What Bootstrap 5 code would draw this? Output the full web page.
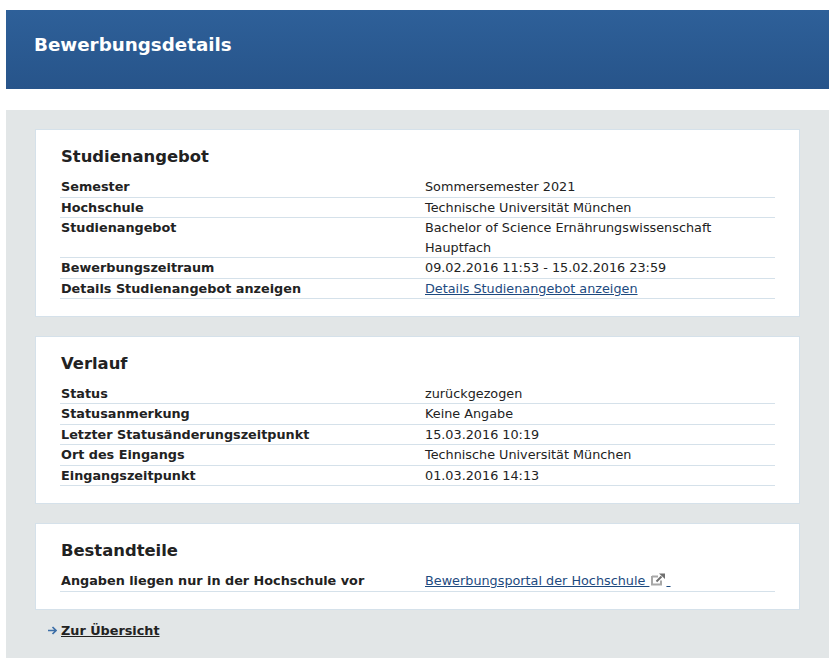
<!DOCTYPE html>
<html lang="de">
<head>
    <meta charset="UTF-8">
    <meta name="viewport" content="width=device-width, initial-scale=1">
    <title>Bewerbungsdetails</title>
    <link href="https://cdn.jsdelivr.net/npm/bootstrap@5.3.0/dist/css/bootstrap.min.css" rel="stylesheet">
    <script src="https://cdn.jsdelivr.net/npm/bootstrap@5.3.0/dist/js/bootstrap.bundle.min.js"></script>
    <style>
        html, body { height: 658px; overflow: hidden; }
        body { font-family: "DejaVu Sans", Verdana, sans-serif; font-size: 12.8px; color: #222; background: #fff; padding: 10px 7px 0 6px; }
        .page-head { height: 79px; padding: 0 28px; background: linear-gradient(#2e6099, #27548a); color: #fff; margin-bottom: 21px; }
        .page-head h1 { font-size: 18.3px; font-weight: 700; margin: 0; padding-top: 24px; line-height: 22px; }
        .page-body { background: #e2e6e7; height: 548px; padding: 19px 29px 0; }
        .detail-box { background: #fff; border: 1px solid #d5e1ea; padding: 16px 24px 17px 25px; margin-bottom: 18.6px; }
        .detail-box h2 { font-size: 16.4px; font-weight: 700; line-height: 22px; margin: 0 0 9.2px; color: #222; }
        .detail-row { display: flex; line-height: 19.5px; border-bottom: 1px solid #d5e1ea; margin-left: -1px; padding-left: 1px; }
        .detail-key { width: 364px; flex: none; font-weight: 700; }
        .detail-val a { color: #1d4a80; }
        .back-link { color: #222; font-weight: 700; margin-left: 13px; margin-top: -7.5px; }
        .back-link a { color: #222; }
        .ext-icon { margin: -3px 0 -2px 2px; vertical-align: 1px; }
    </style>
</head>
<body>

    <div class="page-head">
        <h1>Bewerbungsdetails</h1>
    </div>

    <div class="page-body">

        <div class="detail-box">
            <h2>Studienangebot</h2>
            <div class="detail-row"><div class="detail-key">Semester</div><div class="detail-val">Sommersemester 2021</div></div>
            <div class="detail-row"><div class="detail-key">Hochschule</div><div class="detail-val">Technische Universität München</div></div>
            <div class="detail-row"><div class="detail-key">Studienangebot</div><div class="detail-val">Bachelor of Science Ernährungswissenschaft<br>Hauptfach</div></div>
            <div class="detail-row"><div class="detail-key">Bewerbungszeitraum</div><div class="detail-val">09.02.2016 11:53 - 15.02.2016 23:59</div></div>
            <div class="detail-row"><div class="detail-key">Details Studienangebot anzeigen</div><div class="detail-val"><a href="#">Details Studienangebot anzeigen</a></div></div>
        </div>

        <div class="detail-box">
            <h2>Verlauf</h2>
            <div class="detail-row"><div class="detail-key">Status</div><div class="detail-val">zurückgezogen</div></div>
            <div class="detail-row"><div class="detail-key">Statusanmerkung</div><div class="detail-val">Keine Angabe</div></div>
            <div class="detail-row"><div class="detail-key">Letzter Statusänderungszeitpunkt</div><div class="detail-val">15.03.2016 10:19</div></div>
            <div class="detail-row"><div class="detail-key">Ort des Eingangs</div><div class="detail-val">Technische Universität München</div></div>
            <div class="detail-row"><div class="detail-key">Eingangszeitpunkt</div><div class="detail-val">01.03.2016 14:13</div></div>
        </div>

        <div class="detail-box">
            <h2>Bestandteile</h2>
            <div class="detail-row"><div class="detail-key">Angaben liegen nur in der Hochschule vor</div><div class="detail-val"><a href="#">Bewerbungsportal der Hochschule <svg class="ext-icon" width="15" height="13" viewBox="0 0 15 13"><path d="M1 3.500h6M1 3v8.500h9v-4" fill="none" stroke="#a8a8a8" stroke-width="2"/><path d="M5.500 8.500l5-5" stroke="#6f6f6f" stroke-width="2" fill="none"/><path d="M8 0.500h6v5.500z" fill="#6f6f6f"/></svg>&nbsp;</a></div></div>
        </div>

        <div class="back-link d-flex align-items-center">
            <svg width="9" height="9" viewBox="0 0 9 9" class="me-1"><path d="M0 4.500h7.500M4.500 1l3.500 3.500-3.500 3.500" fill="none" stroke="#3d6fa8" stroke-width="1.700"/></svg>
            <a href="#">Zur Übersicht</a>
        </div>

    </div>

</body>
</html>
